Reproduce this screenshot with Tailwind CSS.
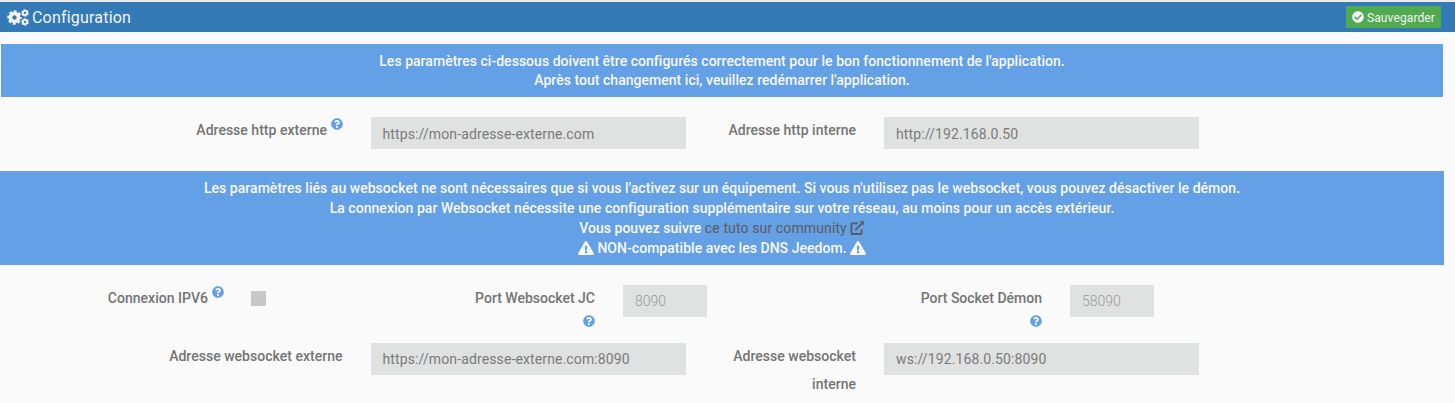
<!DOCTYPE html>
<html lang="fr">
<head>
<meta charset="utf-8">
<title>Configuration</title>
<script src="https://cdn.jsdelivr.net/npm/@tailwindcss/browser@4"></script>
</head>
<body class="bg-[#fafafa] font-['Roboto',sans-serif] text-sm text-[#747474] h-[403px] overflow-hidden">
<svg class="hidden">
  <symbol id="help" viewBox="0 0 512 512"><path d="M504 256c0 136.997-111.043 248-248 248S8 392.997 8 256C8 119.083 119.043 8 256 8s248 111.083 248 248zM262.655 90c-54.497 0-89.255 22.957-116.549 63.758-3.536 5.286-2.353 12.415 2.715 16.258l34.699 26.31c5.205 3.947 12.621 3.008 16.665-2.122 17.864-22.658 30.113-35.797 57.303-35.797 20.429 0 45.698 13.148 45.698 32.958 0 14.976-12.363 22.667-32.534 33.976C247.128 238.528 216 254.941 216 296v4c0 6.627 5.373 12 12 12h56c6.627 0 12-5.373 12-12v-1.333c0-28.462 83.186-29.647 83.186-106.667 0-58.002-60.165-102-116.531-102zM256 338c-25.365 0-46 20.635-46 46 0 25.364 20.635 46 46 46s46-20.636 46-46c0-25.365-20.635-46-46-46z"/></symbol>
  <symbol id="warn" viewBox="0 0 576 512"><path d="M569.517 440.013C587.975 472.007 564.806 512 527.94 512H48.054c-36.937 0-59.999-40.055-41.577-71.987L246.423 23.985c18.467-32.009 64.72-31.951 83.154 0l239.94 416.028zM288 354c-25.405 0-46 20.595-46 46s20.595 46 46 46 46-20.595 46-46-20.595-46-46-46zm-43.673-165.346l7.418 136c.347 6.364 5.609 11.346 11.982 11.346h48.546c6.373 0 11.635-4.982 11.982-11.346l7.418-136c.375-6.874-5.098-12.654-11.982-12.654h-63.383c-6.884 0-12.356 5.78-11.981 12.654z"/></symbol>
</svg>
<header class="h-8 border-t-2 border-[#ebebeb] bg-[#337ab7] flex items-center justify-between pl-[7px] pr-[14px] text-[#f4f4f4]">
  <h1 class="flex items-center gap-[3px] text-base">
    <svg class="w-[22px] h-[17px]" viewBox="0 0 22 17" fill="none" stroke="currentColor">
      <circle cx="7.5" cy="8.5" r="4" stroke-width="3.6"/>
      <circle cx="7.5" cy="8.5" r="6.2" stroke-width="2" stroke-dasharray="2.9 1.97" stroke-dashoffset="1.45"/>
      <circle cx="18" cy="4" r="2.1" stroke-width="1.9"/>
      <circle cx="18" cy="4" r="3.2" stroke-width="1.2" stroke-dasharray="2 1.35"/>
      <circle cx="18" cy="13" r="2.1" stroke-width="1.9"/>
      <circle cx="18" cy="13" r="3.2" stroke-width="1.2" stroke-dasharray="2 1.35"/>
    </svg>
    <span class="pt-[2px] leading-6 tracking-[0.2px]">Configuration</span>
  </h1>
  <button class="w-[95px] h-[22px] bg-[#50aa50] flex items-center justify-center gap-[3px] text-xs">
    <svg class="w-3 h-3" viewBox="0 0 512 512" fill="currentColor"><path d="M504 256c0 136.967-111.033 248-248 248S8 392.967 8 256 119.033 8 256 8s248 111.033 248 248zM227.314 387.314l184-184c6.248-6.248 6.248-16.379 0-22.627l-22.627-22.627c-6.248-6.249-16.379-6.249-22.628 0L216 308.118l-70.059-70.059c-6.248-6.248-16.379-6.248-22.628 0l-22.627 22.627c-6.248 6.248-6.248 16.379 0 22.627l104 104c6.249 6.249 16.379 6.249 22.628.001z"/></svg>
    <span class="pt-px tracking-[0.12px]">Sauvegarder</span>
  </button>
</header>
<main>
  <div class="mt-3 ml-px w-[1442px] h-[53px] pt-[7px] bg-[#64a0e6] text-[#f8f8f8] font-medium text-center tracking-[0.03px]">
    <p class="leading-5">Les paramètres ci-dessous doivent être configurés correctement pour le bon fonctionnement de l'application.</p>
    <p class="leading-[18px]">Après tout changement ici, veuillez redémarrer l'application.</p>
  </div>
  <div class="h-[74px] pt-[19px] flex items-start">
    <label class="w-[342.5px] text-right font-medium leading-7 tracking-[0.02px]">Adresse http externe <sup class="relative -top-[5px] inline-block align-baseline leading-none"><svg class="w-3 h-3 fill-[#64a0e6]"><use href="#help"/></svg></sup></label>
    <div class="mt-px ml-[28.5px] w-[315px] h-8 bg-[#e0e2e1] px-[11.5px] pt-px leading-[33px] tracking-[0.12px] text-[#7a7a7a]">https://mon-adresse-externe.com</div>
    <label class="w-[170px] text-right font-medium leading-7 tracking-[0.02px]">Adresse http interne</label>
    <div class="mt-px ml-7 w-[315px] h-8 bg-[#e0e2e1] px-3 pt-px leading-[33px] tracking-[0.12px] text-[#7a7a7a]">http://192.168.0.50</div>
  </div>
  <div class="w-[1444px] h-[94px] pt-[7px] bg-[#64a0e6] text-[#f8f8f8] font-medium text-center leading-5 tracking-[0.04px]">
    <p>Les paramètres liés au websocket ne sont nécessaires que si vous l'activez sur un équipement. Si vous n'utilisez pas le websocket, vous pouvez désactiver le démon.</p>
    <p>La connexion par Websocket nécessite une configuration supplémentaire sur votre réseau, au moins pour un accès extérieur.</p>
    <p class="flex justify-center items-center">Vous pouvez suivre&nbsp;<a class="font-normal tracking-[0.12px] text-[#5c5c5c] flex items-center gap-[3px]"><span>ce tuto sur community</span><svg class="w-[15px] h-[14px]" viewBox="0 0 15 14" fill="none" stroke="currentColor" stroke-width="1.8"><path d="M8 2.4H2.2a.8.8 0 0 0-.8.8v9a.8.8 0 0 0 .8.8h8.6a.8.8 0 0 0 .8-.8V8.5"/><path d="M5.2 9.2 12.2 2.2"/><path d="M9.6.2h4.6v4.6z" fill="currentColor" stroke="none"/></svg></a></p>
    <p class="flex justify-center items-center gap-[3px]"><svg class="w-4 h-[14px] fill-[#f8f8f8]"><use href="#warn"/></svg><span>NON-compatible avec les DNS Jeedom.</span><svg class="w-4 h-[14px] fill-[#f8f8f8]"><use href="#warn"/></svg></p>
  </div>
  <div class="h-[77px] pt-[19px] flex items-start">
    <label class="w-[223.5px] text-right font-medium leading-7 tracking-[0.02px]">Connexion IPV6 <sup class="relative -top-[5px] inline-block align-baseline leading-none"><svg class="w-3 h-3 fill-[#64a0e6]"><use href="#help"/></svg></sup></label>
    <div class="mt-[7px] ml-[27.5px] size-[15px] bg-[#c8c8c8]"></div>
    <label class="w-[329px] flex flex-col items-end font-medium leading-7">Port Websocket JC<svg class="mt-[2.5px] w-3 h-3 fill-[#64a0e6]"><use href="#help"/></svg></label>
    <div class="mt-px ml-7 w-[84px] h-8 bg-[#e0e2e1] px-3 leading-[33px] font-light text-[#999]">8090</div>
    <label class="w-[335px] flex flex-col items-end font-medium leading-7">Port Socket Démon<svg class="mt-[2.5px] w-3 h-3 fill-[#64a0e6]"><use href="#help"/></svg></label>
    <div class="mt-px ml-7 w-[84px] h-8 bg-[#e0e2e1] px-3 leading-[33px] font-light text-[#999]">58090</div>
  </div>
  <div class="flex items-start">
    <label class="w-[342.5px] text-right font-medium leading-7 tracking-[0.02px]">Adresse websocket externe</label>
    <div class="mt-px ml-[28.5px] w-[315px] h-8 bg-[#e0e2e1] px-[11.5px] leading-[33px] tracking-[0.12px] text-[#7a7a7a]">https://mon-adresse-externe.com:8090</div>
    <label class="w-[170px] pl-10 text-right font-medium leading-7 tracking-[0.02px]">Adresse websocket interne</label>
    <div class="mt-px ml-7 w-[315px] h-8 bg-[#e0e2e1] px-3 leading-[33px] tracking-[0.12px] text-[#7a7a7a]">ws://192.168.0.50:8090</div>
  </div>
</main>
</body>
</html>
